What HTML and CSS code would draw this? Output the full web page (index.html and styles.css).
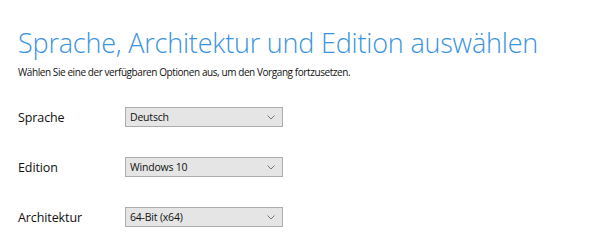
FILE: index.html
```html
<!DOCTYPE html>
<html lang="de">
<head>
  <meta charset="UTF-8">
  <link rel="stylesheet" href="styles.css">
</head>
<body>

<div class="page">
  <h1 class="title">Sprache, Architektur und Edition auswählen</h1>
  <p class="sub">Wählen Sie eine der verfügbaren Optionen aus, um den Vorgang fortzusetzen.</p>

  <div class="rows">
    <div class="row">
      <span class="label">Sprache</span>
      <div class="select"><span>Deutsch</span><svg class="chev" width="8" height="5" viewBox="0 0 8 5"><path d="M0.5 0.5 L4 4 L7.5 0.5" fill="none" stroke="#777" stroke-width="1"/></svg></div>
    </div>
    <div class="row">
      <span class="label">Edition</span>
      <div class="select"><span>Windows 10</span><svg class="chev" width="8" height="5" viewBox="0 0 8 5"><path d="M0.5 0.5 L4 4 L7.5 0.5" fill="none" stroke="#777" stroke-width="1"/></svg></div>
    </div>
    <div class="row">
      <span class="label">Architektur</span>
      <div class="select"><span>64-Bit (x64)</span><svg class="chev" width="8" height="5" viewBox="0 0 8 5"><path d="M0.5 0.5 L4 4 L7.5 0.5" fill="none" stroke="#777" stroke-width="1"/></svg></div>
    </div>
  </div>
</div>

</body>
</html>
```

FILE: styles.css
```css
body {
  margin: 0;
  background: #fff;
  font-family: "Open Sans", "Noto Sans", sans-serif;
  color: #000;
}

.page {
  padding: 25px 0 0 18px;
}

.title {
  margin: 0;
  font-size: 27px;
  line-height: 36px;
  font-weight: 300;
  color: #3a93e0;
  letter-spacing: -0.2px;
}

.sub {
  margin: 4px 0 0 0;
  font-size: 10px;
  line-height: 14px;
  letter-spacing: -0.42px;
  font-weight: 500;
  color: #111;
}

.rows {
  margin-top: 28px;
  display: flex;
  flex-direction: column;
  gap: 30px;
}

.row {
  display: flex;
  align-items: center;
  height: 20px;
}

.label {
  width: 107px;
  font-size: 12.5px;
  letter-spacing: -0.1px;
  color: #111;
}

.select {
  box-sizing: border-box;
  width: 158px;
  height: 20px;
  background: #e5e5e5;
  border: 1px solid #adadad;
  display: flex;
  align-items: center;
  justify-content: space-between;
  padding: 0 7px 0 4px;
  font-size: 10.5px;
  letter-spacing: -0.2px;
  font-weight: 500;
  color: #111;
}

.chev {
  display: block;
}
```
